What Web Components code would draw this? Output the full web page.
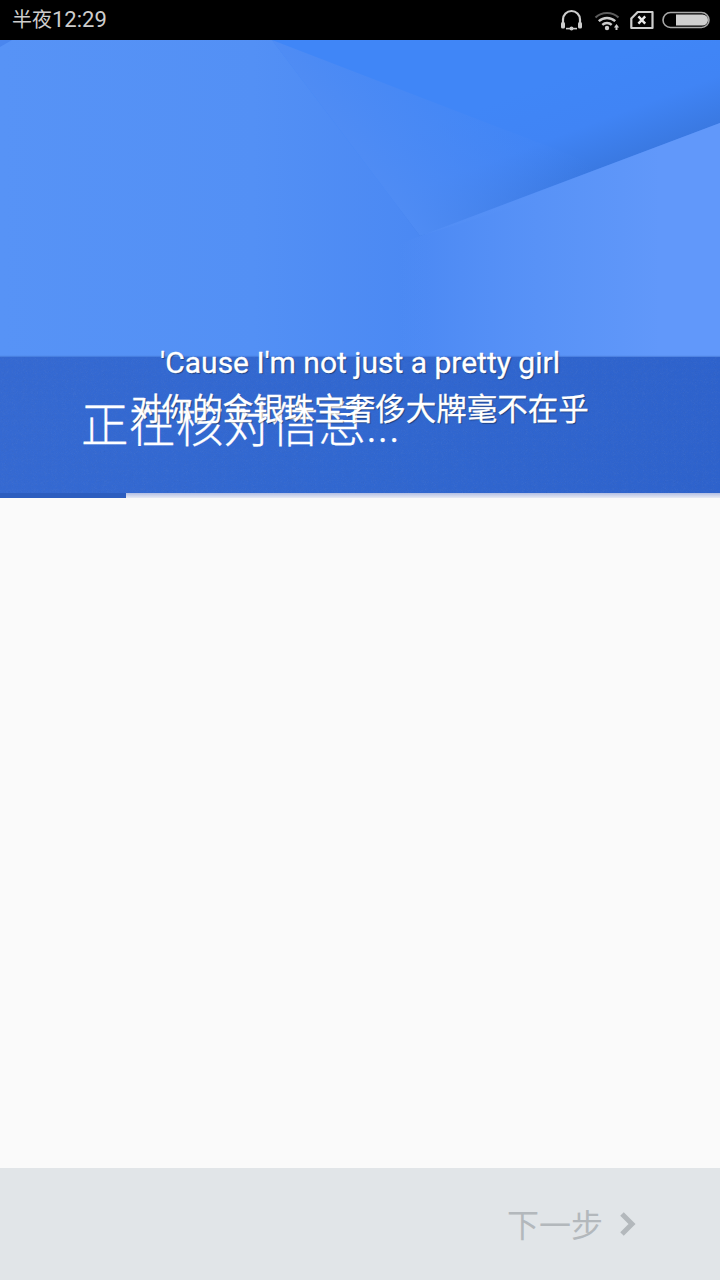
<!DOCTYPE html>
<html lang="zh-CN">
<head>
<meta charset="utf-8">
<title>正在核对信息</title>
<style>
  html, body { margin: 0; padding: 0; background: #fafafa; }
  body { font-family: Roboto, "Noto Sans CJK SC", sans-serif; }
</style>
</head>
<body>
<setup-screen>
  <status-bar slot="status" period="半夜" time="12:29"></status-bar>
  <hero-banner slot="hero" title="正在核对信息..." progress="126"></hero-banner>
  <next-footer slot="footer" label="下一步"></next-footer>
  <lyric-overlay slot="overlay">
    <span>'Cause I'm not just a pretty girl</span>
    <span style="font-size:30.5px">对你的金银珠宝奢侈大牌毫不在乎</span>
  </lyric-overlay>
</setup-screen>

<script>
  class SetupScreen extends HTMLElement {
    constructor() {
      super();
      this.attachShadow({ mode: 'open' });
      this.shadowRoot.innerHTML = `
        <style>
          :host {
            display: flex;
            flex-direction: column;
            position: relative;
            width: 720px;
            height: 1280px;
            overflow: hidden;
            background: #fafafa;
          }
          main { flex: 1; }
        </style>
        <slot name="status"></slot>
        <slot name="hero"></slot>
        <main></main>
        <slot name="footer"></slot>
        <slot name="overlay"></slot>
      `;
    }
  }
  customElements.define('setup-screen', SetupScreen);

  class StatusBar extends HTMLElement {
    constructor() {
      super();
      this.attachShadow({ mode: 'open' });
      this.shadowRoot.innerHTML = `
        <style>
          :host {
            display: flex;
            align-items: center;
            justify-content: space-between;
            height: 40px;
            padding: 0 10px 0 12px;
            background: #000;
            color: #cdcdcd;
            font: 22px/40px Roboto, "Noto Sans CJK SC", sans-serif;
          }
          .period { font-size: 20px; }
          svg { display: block; }
        </style>
        <div><span class="period"></span><span class="time"></span></div>
        <svg width="160" height="40" viewBox="0 0 160 40" fill="none">
          <!-- headset -->
          <path d="M13 27v-7.5a8.5 8.5 0 0 1 17 0V27" stroke="#cdcdcd" stroke-width="2.2"/>
          <rect x="11" y="22" width="4" height="6.5" rx="1.6" fill="#cdcdcd"/>
          <rect x="28" y="22" width="4" height="6.5" rx="1.6" fill="#cdcdcd"/>
          <path d="M16 28.6h11" stroke="#cdcdcd" stroke-width="1.6"/>
          <circle cx="21.5" cy="28.6" r="2" fill="#cdcdcd"/>
          <!-- wifi -->
          <path d="M45.5 17.5a17 17 0 0 1 23 0" stroke="#5c5c5c" stroke-width="2.2"/>
          <path d="M48.8 21.2a12 12 0 0 1 16.4 0" stroke="#cdcdcd" stroke-width="2.4"/>
          <path d="M52.3 24.8a7 7 0 0 1 9.4 0" stroke="#cdcdcd" stroke-width="2.4"/>
          <circle cx="57" cy="28" r="2.2" fill="#cdcdcd"/>
          <path d="M66.5 24l-2.6 3.4h1.6v2.6h2v-2.6h1.6z" fill="#cdcdcd"/>
          <!-- sim card, no service -->
          <path d="M81.3 18.6l6.4-6.6h14.8v16H81.3z" stroke="#cdcdcd" stroke-width="2.2" stroke-linejoin="round"/>
          <path d="M88.4 16.4l6.8 7.2M95.2 16.4l-6.8 7.2" stroke="#e8e8e8" stroke-width="2.4"/>
          <!-- battery -->
          <rect x="113" y="12.5" width="46" height="15" rx="7.5" stroke="#a8a8a8" stroke-width="1.6"/>
          <path d="M126 14.5h26.5a5.5 5.5 0 0 1 0 11H126z" fill="#cfcfcf"/>
        </svg>
      `;
    }

    connectedCallback() {
      this.shadowRoot.querySelector('.period').textContent = this.getAttribute('period');
      this.shadowRoot.querySelector('.time').textContent = this.getAttribute('time');
    }
  }
  customElements.define('status-bar', StatusBar);

  class HeroBanner extends HTMLElement {
    constructor() {
      super();
      this.attachShadow({ mode: 'open' });
      this.shadowRoot.innerHTML = `
        <style>
          :host {
            display: flex;
            flex-direction: column;
            position: relative;
            height: 458px;
            background: #5590f5;
          }
          .art { position: absolute; left: 0; top: 0; }
          .spacer { height: 317px; }
          .band {
            position: relative;
            flex: 1;
            overflow: hidden;
            background: linear-gradient(90deg, #3469d3 0%, #3067d1 50%, #2d62cd 100%);
            box-shadow: 0 -1px 1px rgba(30, 70, 160, 0.25);
          }
          .band svg { position: absolute; left: 0; top: 0; opacity: 0.1; }
          h1 {
            position: relative;
            margin: 0;
            padding: 39px 0 0 81px;
            font: 300 47.5px/60px Roboto, "Noto Sans CJK SC", sans-serif;
            -webkit-text-stroke: 0.3px #fff;
            color: #fff;
          }
          .track {
            position: relative;
            height: 5px;
            background: linear-gradient(#b2bee2, #e8ebf5);
          }
          .bar { height: 100%; background: #2c5dbf; }
        </style>
        <svg class="art" width="720" height="320" viewBox="0 0 720 320">
          <defs>
            <linearGradient id="base" gradientUnits="userSpaceOnUse" x1="0" x2="720" y1="0" y2="0">
              <stop offset="0" stop-color="#5793f6"/>
              <stop offset="0.35" stop-color="#5390f5"/>
              <stop offset="0.6" stop-color="#4a88f3"/>
              <stop offset="1" stop-color="#4a88f3"/>
            </linearGradient>
            <linearGradient id="top" gradientUnits="userSpaceOnUse" x1="565" x2="600" y1="35" y2="128">
              <stop offset="0" stop-color="#4086f7"/>
              <stop offset="0.55" stop-color="#4084f5"/>
              <stop offset="1" stop-color="#3a79e2"/>
            </linearGradient>
            <!-- soft side of the dark shape, blends back into the base colour -->
            <linearGradient id="soft" gradientUnits="userSpaceOnUse" x1="346" x2="490" y1="98" y2="-10">
              <stop offset="0" stop-color="#4f8cf4"/>
              <stop offset="1" stop-color="#4a88f3" stop-opacity="0"/>
            </linearGradient>
            <linearGradient id="right" gradientUnits="userSpaceOnUse" x1="400" x2="660" y1="0" y2="0">
              <stop offset="0" stop-color="#6198fa" stop-opacity="0"/>
              <stop offset="0.6" stop-color="#5c95f8" stop-opacity="0.85"/>
              <stop offset="1" stop-color="#6198fa"/>
            </linearGradient>
          </defs>
          <rect width="720" height="320" fill="url(#base)"/>
          <polygon points="272,0 720,0 720,83 420,196" fill="url(#top)"/>
          <polygon points="272,0 620,134 420,196" fill="url(#soft)"/>
          <polygon points="720,83 720,320 370,320 370,215" fill="url(#right)"/>
          <polygon points="0,0 12,0 0,7" fill="#4a86ee"/>
        </svg>
        <div class="spacer"></div>
        <div class="band">
          <svg width="720" height="136">
            <filter id="grain"><feTurbulence baseFrequency="0.9" numOctaves="2"/><feColorMatrix type="saturate" values="0"/></filter>
            <rect width="720" height="136" filter="url(#grain)"/>
          </svg>
          <h1></h1>
        </div>
        <div class="track"><div class="bar"></div></div>
      `;
    }

    connectedCallback() {
      this.shadowRoot.querySelector('h1').textContent = this.getAttribute('title');
      this.shadowRoot.querySelector('.bar').style.width = this.getAttribute('progress') + 'px';
    }
  }
  customElements.define('hero-banner', HeroBanner);

  class NextFooter extends HTMLElement {
    constructor() {
      super();
      this.attachShadow({ mode: 'open' });
      this.shadowRoot.innerHTML = `
        <style>
          :host {
            display: flex;
            align-items: center;
            justify-content: flex-end;
            gap: 15px;
            height: 112px;
            padding: 0 82px 0 0;
            background: #e1e5e8;
            color: #b3b8bc;
            font: 400 32px/112px "Noto Sans CJK SC", sans-serif;
          }
          .label { position: relative; top: -1px; }
          svg { display: block; }
        </style>
        <span class="label"></span>
        <svg width="20" height="26" viewBox="0 0 20 26" fill="none">
          <path d="M4 3l10 10L4 23" stroke="#b3b8bc" stroke-width="5"/>
        </svg>
      `;
    }

    connectedCallback() {
      this.shadowRoot.querySelector('.label').textContent = this.getAttribute('label');
    }
  }
  customElements.define('next-footer', NextFooter);

  // lyrics float over the banner, not part of the page flow
  class LyricOverlay extends HTMLElement {
    constructor() {
      super();
      this.attachShadow({ mode: 'open' });
      this.shadowRoot.innerHTML = `
        <style>
          :host {
            position: absolute;
            left: 0;
            right: 0;
            top: 340px;
            display: flex;
            flex-direction: column;
            align-items: center;
            gap: 1px;
            color: #fff;
            font: 30px/46px Roboto, "Noto Sans CJK SC", sans-serif;
            -webkit-text-stroke: 0.3px #fff;
            text-shadow: 1px 1px 1px rgba(0, 0, 0, 0.4);
          }
        </style>
        <slot></slot>
      `;
    }
  }
  customElements.define('lyric-overlay', LyricOverlay);
</script>
</body>
</html>
